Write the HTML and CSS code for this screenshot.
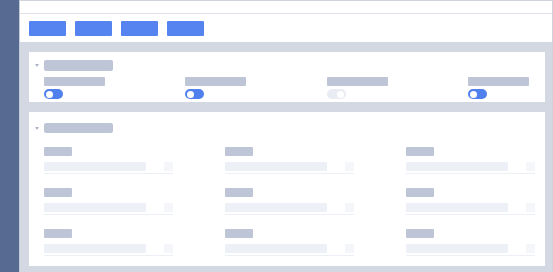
FILE: index.html
```html
<!DOCTYPE html>
<html lang="en">
<head>
    <meta charset="UTF-8">
    <meta name="viewport" content="width=device-width, initial-scale=1.0">
    <title>Settings Skeleton</title>
    <link rel="stylesheet" href="styles.css">
</head>
<body>
    <div class="app">
        <div class="sidebar"></div>

        <div class="main">
            <div class="topbar"></div>

            <div class="toolbar">
                <span class="btn"></span>
                <span class="btn"></span>
                <span class="btn"></span>
                <span class="btn"></span>
            </div>

            <div class="content">
                <!-- switches -->
                <div class="panel panel-switches">
                    <div class="panel-head">
                        <span class="caret"></span>
                        <span class="title-bar"></span>
                    </div>
                    <div class="switch-row">
                        <div class="switch-item">
                            <span class="switch-label"></span>
                            <span class="toggle on"></span>
                        </div>
                        <div class="switch-item">
                            <span class="switch-label"></span>
                            <span class="toggle on"></span>
                        </div>
                        <div class="switch-item">
                            <span class="switch-label"></span>
                            <span class="toggle off"></span>
                        </div>
                        <div class="switch-item">
                            <span class="switch-label"></span>
                            <span class="toggle on"></span>
                        </div>
                    </div>
                </div>

                <!-- fields -->
                <div class="panel panel-fields">
                    <div class="panel-head">
                        <span class="caret"></span>
                        <span class="title-bar"></span>
                    </div>
                    <div class="field-grid">
                        <div class="field"><span class="field-label"></span><div class="field-input"><span class="input-bar"></span><span class="input-addon"></span></div></div>
                        <div class="field"><span class="field-label"></span><div class="field-input"><span class="input-bar"></span><span class="input-addon"></span></div></div>
                        <div class="field"><span class="field-label"></span><div class="field-input"><span class="input-bar"></span><span class="input-addon"></span></div></div>
                        <div class="field"><span class="field-label"></span><div class="field-input"><span class="input-bar"></span><span class="input-addon"></span></div></div>
                        <div class="field"><span class="field-label"></span><div class="field-input"><span class="input-bar"></span><span class="input-addon"></span></div></div>
                        <div class="field"><span class="field-label"></span><div class="field-input"><span class="input-bar"></span><span class="input-addon"></span></div></div>
                        <div class="field"><span class="field-label"></span><div class="field-input"><span class="input-bar"></span><span class="input-addon"></span></div></div>
                        <div class="field"><span class="field-label"></span><div class="field-input"><span class="input-bar"></span><span class="input-addon"></span></div></div>
                        <div class="field"><span class="field-label"></span><div class="field-input"><span class="input-bar"></span><span class="input-addon"></span></div></div>
                    </div>
                </div>
            </div>
        </div>
    </div>
</body>
</html>
```

FILE: styles.css
```css
* {
    margin: 0;
    padding: 0;
    box-sizing: border-box;
}

body {
    font-family: "Liberation Sans", Arial, sans-serif;
    background: #d4d8e2;
    width: 553px;
    height: 272px;
    overflow: hidden;
}

.app {
    display: flex;
    height: 272px;
}

.sidebar {
    width: 20px;
    background: #576a91;
    border-right: 1px solid #c3cad8;
}

.main {
    flex: 1;
    display: flex;
    flex-direction: column;
    background: #d4d8e2;
    border-top: 1px solid #cdd2dd;
    border-right: 1px solid #cdd2dd;
}

.topbar {
    height: 13px;
    background: white;
    border-bottom: 1px solid #dfe2ea;
}

.toolbar {
    display: flex;
    gap: 9px;
    height: 28px;
    padding: 7px 9px 0;
    background: white;
}

.btn {
    display: block;
    width: 37px;
    height: 15px;
    background: #5584f1;
    border-radius: 1px;
}

.content {
    flex: 1;
    display: flex;
    flex-direction: column;
    gap: 10px;
    padding: 10px 7px 0 9px;
}

.panel {
    background: white;
}

.panel-head {
    display: flex;
    align-items: center;
    padding-left: 6px;
}

.caret {
    width: 0;
    height: 0;
    margin-right: 5px;
    border-left: 2px solid transparent;
    border-right: 2px solid transparent;
    border-top: 3px solid #aeb6c8;
}

.title-bar {
    display: block;
    width: 69px;
    height: 11px;
    background: #bdc5d7;
    border-radius: 2px;
}

/* switches panel */
.panel-switches {
    height: 50px;
    padding-top: 8px;
}

.switch-row {
    display: flex;
    justify-content: space-between;
    padding: 6px 16px 0 15px;
}

.switch-item {
    display: flex;
    flex-direction: column;
    gap: 3px;
}

.switch-label {
    display: block;
    width: 61px;
    height: 9px;
    background: #bdc5d7;
    border-radius: 1px;
}

.toggle {
    position: relative;
    display: block;
    width: 19px;
    height: 10px;
    border-radius: 5px;
}

.toggle::after {
    content: "";
    position: absolute;
    top: 1.5px;
    width: 7px;
    height: 7px;
    border-radius: 50%;
    background: white;
}

.toggle.on {
    background: #4f80ee;
}

.toggle.on::after {
    left: 2px;
}

.toggle.off {
    background: #e9ecf2;
}

.toggle.off::after {
    right: 2px;
}

/* fields panel */
.panel-fields {
    height: 154px;
    padding-top: 11px;
}

.panel-fields .title-bar {
    height: 10px;
}

.field-grid {
    display: grid;
    grid-template-columns: repeat(3, 129px);
    column-gap: 52px;
    row-gap: 14px;
    padding: 14px 0 0 15px;
}

.field {
    display: flex;
    flex-direction: column;
}

.field-label {
    display: block;
    width: 28px;
    height: 9px;
    background: #bdc5d7;
    border-radius: 1px;
}

.field-input {
    display: flex;
    justify-content: space-between;
    margin-top: 6px;
    padding-bottom: 2px;
    border-bottom: 1px solid #eceff5;
}

.input-bar {
    display: block;
    width: 102px;
    height: 9px;
    background: #edf0f7;
    border-radius: 1px;
}

.input-addon {
    display: block;
    width: 9px;
    height: 9px;
    background: #f5f6fa;
}
```
